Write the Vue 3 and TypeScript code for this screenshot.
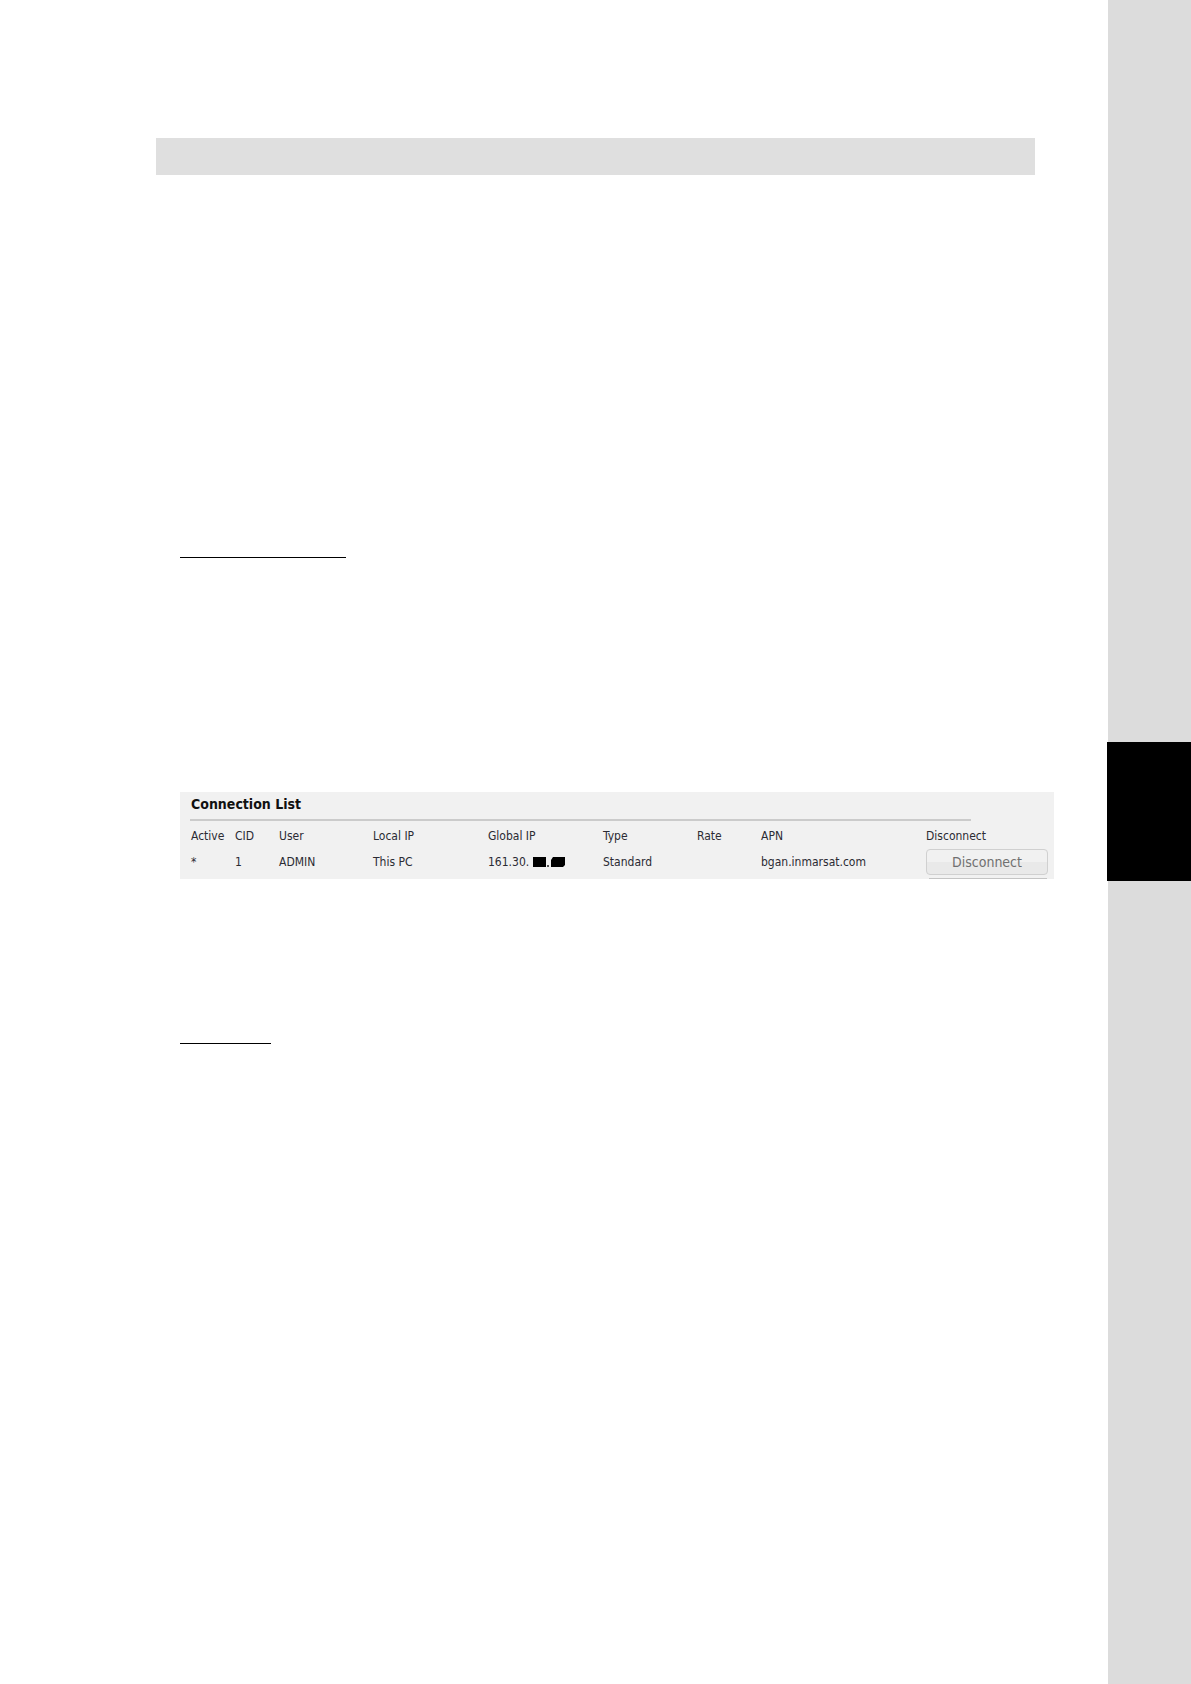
<script setup lang="ts">
interface Connection {
  active: string
  cid: number
  user: string
  localIp: string
  globalIp: string
  type: string
  rate: string
  apn: string
}

const columns: { label: string; name: string }[] = [
  { label: 'Active', name: 'narrow' },
  { label: 'CID', name: 'narrow' },
  { label: 'User', name: 'medium' },
  { label: 'Local IP', name: 'address' },
  { label: 'Global IP', name: 'address' },
  { label: 'Type', name: 'medium' },
  { label: 'Rate', name: 'rate' },
  { label: 'APN', name: 'apn' },
  { label: 'Disconnect', name: 'action' },
]

const connections: Connection[] = [
  {
    active: '*',
    cid: 1,
    user: 'ADMIN',
    localIp: 'This PC',
    globalIp: '161.30.',
    type: 'Standard',
    rate: '',
    apn: 'bgan.inmarsat.com',
  },
]
</script>

<template>
  <div class="page">
    <main class="content">
      <div class="heading-bar"></div>
      <hr class="rule rule-long" />
      <section class="panel">
        <h2 class="title">Connection List</h2>
        <table class="list">
          <thead>
            <tr>
              <th v-for="column in columns" :key="column.label" :class="column.name" scope="col">
                {{ column.label }}
              </th>
            </tr>
          </thead>
          <tbody>
            <tr v-for="item in connections" :key="item.cid">
              <td>{{ item.active }}</td>
              <td>{{ item.cid }}</td>
              <td>{{ item.user }}</td>
              <td>{{ item.localIp }}</td>
              <td>
                <span class="ip">
                  {{ item.globalIp }}
                  <svg class="mask" width="32" height="12" viewBox="0 0 32 12" aria-hidden="true">
                    <path d="M0 1H13V11H0Z" />
                    <path d="M20 1H32V9L30 11H18V4Z" />
                    <path d="M14 9H16V11H14Z" fill="#555" />
                  </svg>
                </span>
              </td>
              <td>{{ item.type }}</td>
              <td>{{ item.rate }}</td>
              <td>{{ item.apn }}</td>
              <td><button class="disconnect" type="button">Disconnect</button></td>
            </tr>
          </tbody>
        </table>
        <div class="next-row"></div>
      </section>
      <hr class="rule rule-short" />
    </main>
    <aside class="margin-strip">
      <div class="chapter-tab"></div>
    </aside>
  </div>
</template>

<style>
body {
  margin: 0;
  background: #fff;
}
</style>

<style scoped>
.page {
  display: flex;
  min-height: 100vh;
  font-family: "DejaVu Sans Condensed", "DejaVu Sans", sans-serif;
  font-size: 12px;
  color: #2b2b33;
}

.content {
  flex: 1;
  min-width: 0;
  padding: 138px 54px 0 180px;
}

.heading-bar {
  height: 37px;
  margin: 0 19px 0 -24px;
  background: #dfdfdf;
}

.rule {
  height: 1px;
  margin: 0;
  border: 0;
  background: #000;
}

.rule-long {
  width: 166px;
  margin-top: 382px;
}

.rule-short {
  width: 91px;
  margin-top: 164px;
}

.panel {
  box-sizing: border-box;
  margin-top: 234px;
  padding: 0 5px 0 10px;
  background: #f1f1f1;
}

.title {
  box-sizing: border-box;
  height: 29px;
  margin: 0 78px 0 0;
  padding: 0 1px;
  border-bottom: 2px solid #cbcbcb;
  font-size: 14px;
  line-height: 24px;
  color: #111;
}

.list {
  width: 100%;
  table-layout: fixed;
  border-collapse: collapse;
}

th,
td {
  padding: 0 1px;
  font-weight: normal;
  text-align: left;
  white-space: nowrap;
}

th {
  height: 26px;
  padding-top: 2px;
}

td {
  height: 26px;
}

.narrow {
  width: 42px;
}

.medium {
  width: 92px;
}

.address {
  width: 113px;
}

.rate {
  width: 62px;
}

.apn {
  width: 163px;
}

.ip {
  display: flex;
  align-items: center;
  gap: 4px;
}

.disconnect {
  display: block;
  box-sizing: border-box;
  width: 100%;
  height: 26px;
  padding: 0;
  border: 1px solid #d0d0d0;
  border-radius: 4px;
  background: linear-gradient(#f1f1f1 50%, #e9e9e9 50%);
  font-family: inherit;
  font-size: 14px;
  color: #707070;
}

.next-row {
  box-sizing: border-box;
  width: 118px;
  height: 4px;
  margin: 0 2px 0 auto;
  border-bottom: 1px solid #c4c4c4;
}

.margin-strip {
  width: 83px;
  padding-top: 742px;
  background: #dcdcdc;
}

.chapter-tab {
  height: 139px;
  margin-left: -1px;
  background: #000;
}
</style>
